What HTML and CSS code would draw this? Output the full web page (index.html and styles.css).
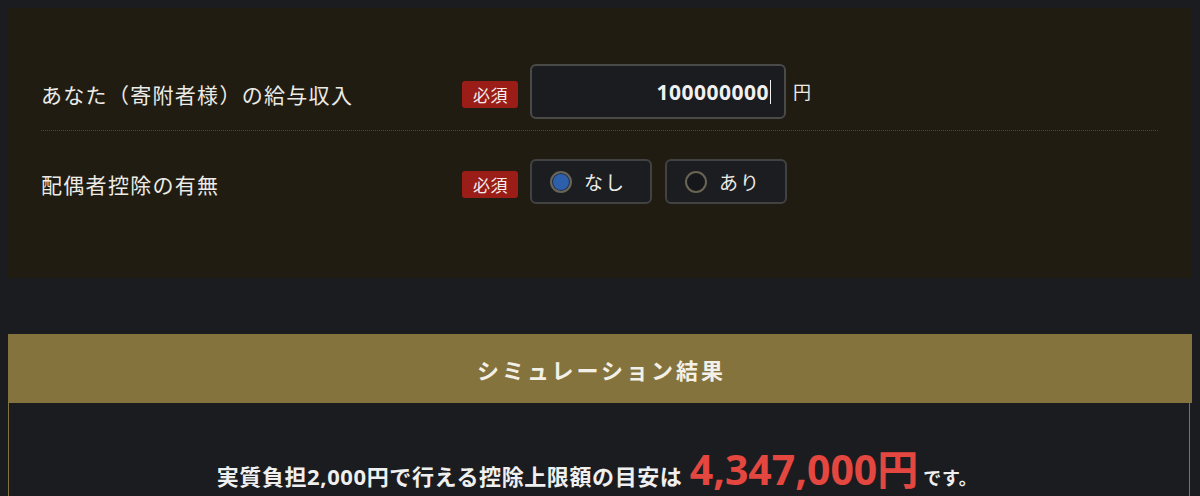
FILE: index.html
```html
<!DOCTYPE html>
<html lang="ja">
<head>
<meta charset="utf-8">
<title>ふるさと納税シミュレーション</title>
<link rel="stylesheet" href="styles.css">
</head>
<body>
<section class="form-panel">
  <div class="row row-income">
    <div class="label">あなた（寄附者様）の給与収入</div>
    <span class="badge">必須</span>
    <div class="input-wrap"><input class="num-input" type="text" value="100000000"><span class="caret"></span></div>
    <span class="unit">円</span>
  </div>
  <div class="row row-spouse">
    <div class="label">配偶者控除の有無</div>
    <span class="badge">必須</span>
    <div class="radios">
      <label class="radio">
        <input type="radio" name="spouse" checked>
        <span class="dot checked"></span>
        <span class="radio-text">なし</span>
      </label>
      <label class="radio">
        <input type="radio" name="spouse">
        <span class="dot"></span>
        <span class="radio-text">あり</span>
      </label>
    </div>
  </div>
</section>
<section class="result">
  <h2 class="result-head">シミュレーション結果</h2>
  <div class="result-body">
    <p class="result-text">実質負担2,000円で行える控除上限額の目安は <span class="amount">4,347,000円</span><span class="tail">です。</span></p>
  </div>
</section>
</body>
</html>
```
FILE: styles.css
```css
* { box-sizing: border-box; }
html, body { background: #1b1c1f; }
body {
  margin: 8px;
  color: #ecebe6;
  font-family: "Noto Sans", "Noto Sans CJK JP", sans-serif;
}
.form-panel {
  background: #201c12;
  padding: 0 34px 0 33px;
}
.row {
  display: flex;
  align-items: center;
}
.row-income {
  padding: 56px 0 11px;
  border-bottom: 1px dotted #4e4536;
}
.row-spouse {
  padding: 28px 0 74px;
}
.label {
  width: 421px;
  margin-top: 5px;
  font-size: 21px;
  letter-spacing: 1.3px;
  color: #ecebe6;
}
.badge {
  width: 56px;
  height: 27px;
  margin-right: 12px;
  margin-top: 6px;
  display: flex;
  align-items: center;
  justify-content: center;
  background: #9a1d17;
  border-radius: 3px;
  color: #f4eeee;
  font-size: 17px;
  letter-spacing: 0.5px;
  padding-left: 1px;
}
.input-wrap {
  position: relative;
  width: 256px;
  height: 55px;
}
.num-input {
  width: 100%;
  height: 100%;
  background: #1a1c1f;
  border: 2px solid #4a4a49;
  border-radius: 6px;
  color: #f0f0f0;
  font-family: "Noto Sans", sans-serif;
  font-weight: bold;
  font-size: 21px;
  letter-spacing: 0.5px;
  text-align: right;
  padding: 0 15px 0 12px;
  outline: none;
}
.caret {
  position: absolute;
  right: 15px;
  top: 16px;
  width: 1.5px;
  height: 24px;
  background: #f0f0f0;
}
.unit {
  margin-left: 7px;
  margin-top: -2px;
  font-size: 18px;
  color: #ecebe6;
}
.radios {
  display: flex;
  gap: 13px;
}
.radio {
  width: 122px;
  height: 45px;
  display: flex;
  align-items: center;
  gap: 12px;
  padding-left: 18px;
  background: #1b1d20;
  border: 2px solid #424242;
  border-radius: 6px;
  cursor: pointer;
}
.radio input { display: none; }
.dot {
  width: 22px;
  height: 22px;
  border-radius: 50%;
  border: 2px solid #6a6455;
  background: #16171a;
}
.dot.checked {
  background: #2e5fab;
  box-shadow: inset 0 0 0 1px #1e2a3c;
}
.radio-text {
  font-size: 19px;
  letter-spacing: 2px;
  color: #ecebe6;
}
.result {
  margin-top: 56px;
}
.result-head {
  margin: 0;
  height: 69px;
  display: flex;
  align-items: center;
  justify-content: center;
  background: #85733d;
  color: #f3f0e8;
  font-size: 22px;
  font-weight: bold;
  letter-spacing: 3px;
  padding-left: 3px;
}
.result-body {
  margin-right: 2px;
  border: 1px solid #85733d;
  border-top: none;
  background: #1b1c1f;
  padding: 38px 20px 40px;
  text-align: center;
}
.result-text {
  margin: 0;
  font-size: 22px;
  font-weight: bold;
  letter-spacing: 0.6px;
  color: #efefef;
  line-height: 56px;
  padding-right: 4px;
}
.amount {
  color: #e4473f;
  font-size: 41px;
  letter-spacing: 0;
  margin-left: 1px;
}
.tail {
  font-size: 18px;
  margin-left: 5px;
}
```
